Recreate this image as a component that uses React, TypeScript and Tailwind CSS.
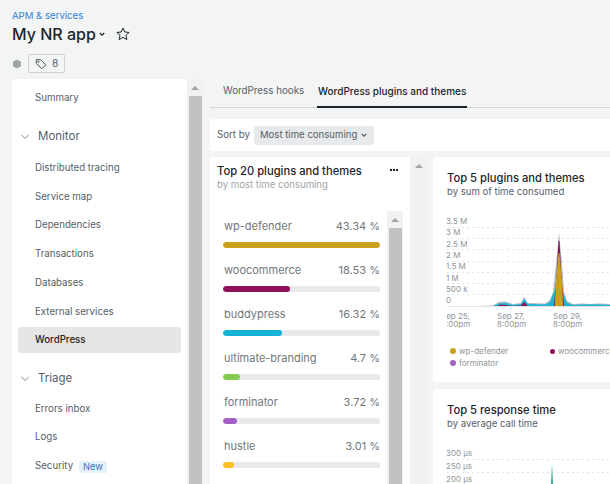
import React from "react";

function Chevron({ className }: { className?: string }) {
  return (
    <svg viewBox="0 0 12 8" className={className} fill="none" stroke="currentColor" strokeWidth="1">
      <path d="M1 1l5 5 5-5" />
    </svg>
  );
}

function SmallCaret() {
  return (
    <svg viewBox="0 0 8 6" className="w-[6px] h-[5px] shrink-0" fill="none" stroke="currentColor" strokeWidth="1.6">
      <path d="M1 1l3 3 3-3" />
    </svg>
  );
}

function NavItem({ label, active, badge }: { label: string; active?: boolean; badge?: boolean }) {
  return (
    <div className={`mx-[6px] h-[26px] rounded-[3px] flex items-center pl-[17px] pt-[2px] text-[9.7px] mb-[2.8px] ${active ? "bg-[#e6e6e6] text-[#1d252c] font-medium" : "text-[#54606a]"}`}>
      {label}
      {badge && <span className="ml-[6px] bg-[#e3f1fb] text-[#3f6fb5] rounded-[2px] px-[4px] h-[12px] leading-[12px] text-[9.3px]">New</span>}
    </div>
  );
}

function Group({ label }: { label: string }) {
  return (
    <div className="flex items-center h-[20px] pl-[8px] text-[#54606a] text-[11.5px]">
      <Chevron className="w-[10px] h-[6px] text-[#54606a]" />
      <span className="ml-[8px]">{label}</span>
    </div>
  );
}

function ScrollBar({ className, thumb = true }: { className?: string; thumb?: boolean }) {
  return (
    <div className={`flex flex-col items-center bg-[#f1f1f1] ${className ?? ""}`}>
      <div className="h-[17px] w-full flex items-center justify-center shrink-0">
        <div className="w-0 h-0 border-l-[4px] border-r-[4px] border-b-[4px] border-l-transparent border-r-transparent border-b-[#a3a3a3]" />
      </div>
      {thumb && <div className="flex-1 w-[13px] bg-[#c1c1c1]" />}
    </div>
  );
}

const plugins = [
  { n: "wp-defender", v: "43.34 %", w: 157, c: "#cba01b" },
  { n: "woocommerce", v: "18.53 %", w: 67, c: "#8f1059" },
  { n: "buddypress", v: "16.32 %", w: 59, c: "#14b3d6" },
  { n: "ultimate-branding", v: "4.7 %", w: 17, c: "#84c951" },
  { n: "forminator", v: "3.72 %", w: 14, c: "#a45fc2" },
  { n: "hustle", v: "3.01 %", w: 11, c: "#fbbf24" },
];

function Chart1() {
  return (
    <svg viewBox="0 0 177 94" className="w-[177px] h-[94px] block">
      {[11, 22, 33, 45, 56, 67, 78].map((y) => (
        <line key={y} x1="14" x2="177" y1={y + 0.5} y2={y + 0.5} stroke="#e3e4e4" strokeWidth="1" strokeDasharray="2 3" />
      ))}
      <line x1="14" x2="177" y1="90.5" y2="90.5" stroke="#e3e4e4" />
      <path d="M45 90 L60 89.5 L66 86 L72 85.5 L80 88 L88 87 L91 81 L95 87 L112 87.5 L117 84 L120 76 L123 48 L126 16 L129 48 L131 76 L134 85 L140 88 L150 87.5 L156 88 L166 87.5 L177 88 L177 90 Z" fill="#aebbc2" />
      <path d="M45 90 L60 90 L66 87.5 L72 87 L80 89 L88 88 L91 83 L95 88 L112 88.5 L117 86 L120 78 L123 72 L129 72 L132 82 L134 87 L140 89 L150 88.5 L166 88.5 L177 89 L177 90 Z" fill="#1cb4d4" />
      <path d="M121 90 L123.5 60 L125.5 25 L126.5 25 L128.5 60 L131 90 Z" fill="#8f1059" />
      <path d="M122 90 L122.5 71 L125.5 37 L126.5 37 L129.5 71 L130 90 Z" fill="#cba01b" />
      <path d="M64 90 L68 88.5 L80 90 L88 89.5 L91 86 L95 90 Z" fill="#8f1059" />
    </svg>
  );
}

function Chart2() {
  return (
    <svg viewBox="0 0 177 36" className="w-[177px] h-[36px] block">
      {[11, 24].map((y) => (
        <line key={y} x1="14" x2="177" y1={y + 0.5} y2={y + 0.5} stroke="#e3e4e4" strokeDasharray="2 3" />
      ))}
      <path d="M118 36 L119 16 L120 36 Z" fill="#2fa58f" />
    </svg>
  );
}

export default function App() {
  return (
    <div className="w-[610px] h-[484px] overflow-hidden bg-[#f3f5f4] font-['Inter',sans-serif]">
      <div className="pl-[12px] pt-[10px] h-[79px]">
        <div className="text-[9.6px] leading-[12px] text-[#2f7fd6]">APM &amp; services</div>
        <div className="flex items-center mt-[1px] h-[22px]">
          <span className="text-[16px] font-medium text-[#1d252c]">My NR app</span>
          <span className="ml-[3px] text-[#1d252c]"><SmallCaret /></span>
          <svg viewBox="0 0 24 24" className="w-[16px] h-[16px] ml-[10px] text-[#1d252c]" fill="none" stroke="currentColor" strokeWidth="1.5">
            <path d="M12 3l2.8 6 6.4.7-4.8 4.3 1.4 6.4L12 17l-5.8 3.4 1.4-6.4-4.8-4.3 6.4-.7z" />
          </svg>
        </div>
        <div className="flex items-center mt-[9px]">
          <svg viewBox="0 0 10 10" className="w-[10px] h-[10px]"><path d="M5 .5L9 2.8v4.4L5 9.5 1 7.2V2.8z" fill="#9ea5a9" /></svg>
          <div className="ml-[6px] h-[19px] w-[37px] border border-[#ccd0d2] rounded-[2px] flex items-center justify-center gap-[5px] text-[10px] text-[#54606a]">
            <svg viewBox="0 0 14 14" className="w-[12px] h-[12px]" fill="none" stroke="#2d3338" strokeWidth="1"><path d="M1.5 2h5l6 6-4.5 4.5-6.5-6z" /><circle cx="4" cy="4.5" r=".7" /></svg>
            8
          </div>
        </div>
      </div>

      <div className="flex h-[405px]">
        <div className="ml-[12px] w-[175px] bg-white rounded-t-[3px] pt-[5px] overflow-hidden shrink-0">
          <NavItem label="Summary" />
          <div className="h-[14.2px]" />
          <Group label="Monitor" />
          <div className="h-[7px]" />
          {["Distributed tracing", "Service map", "Dependencies", "Transactions", "Databases", "External services"].map((l) => (
            <NavItem key={l} label={l} />
          ))}
          <NavItem label="WordPress" active />
          <div className="h-[13.4px]" />
          <Group label="Triage" />
          <div className="h-[6px]" />
          <NavItem label="Errors inbox" />
          <NavItem label="Logs" />
          <NavItem label="Security" badge />
        </div>
        <ScrollBar className="w-[16px] shrink-0" />

        <div className="ml-[7px] flex-1 min-w-0">
          <div className="h-[29px] border-b border-[#d4d7d8] flex text-[10px]">
            <div className="pl-[13px] w-[107px] h-[29px] pb-[5px] flex items-center text-[9.8px] text-[#54606a]">WordPress hooks</div>
            <div className="w-[150px] pl-[1px] h-[29px] pb-[3px] border-b-2 border-[#1d252c] flex items-center font-medium text-[#1d252c] whitespace-nowrap">WordPress plugins and themes</div>
          </div>
          <div className="mt-[11px] h-[32px] bg-white rounded-l-[3px] flex items-center pl-[7px] text-[9.7px]">
            <span className="text-[#54606a]">Sort by</span>
            <div className="ml-[4px] h-[19px] w-[120px] bg-[#e8e9ea] rounded-[2px] flex items-center pl-[6px] gap-[4px] text-[9.6px] text-[#54606a] whitespace-nowrap">
              Most time consuming <SmallCaret />
            </div>
          </div>
          <div className="flex mt-[6px]">
            <div className="w-[200px] h-[327px] bg-white rounded-t-[3px] pl-[7px] shrink-0">
              <div className="flex items-start pt-[7px] h-[54px]">
                <div className="w-[173px]">
                  <div className="text-[11.2px] leading-[14px] font-medium text-[#1d252c] whitespace-nowrap">Top 20 plugins and themes</div>
                  <div className="text-[9.6px] leading-[13px] text-[#9ea5a9]">by most time consuming</div>
                </div>
                <div className="mt-[5px] text-[#1d252c] flex gap-[1px]">
                  <i className="w-[2px] h-[2px] bg-current" /><i className="w-[2px] h-[2px] bg-current" /><i className="w-[2px] h-[2px] bg-current" />
                </div>
              </div>
              <div className="flex h-[273px]">
                <div className="w-[157px] ml-[6px] shrink-0">
                  {plugins.map((p) => (
                    <div key={p.n} className="h-[44px] pt-[8px]">
                      <div className="flex justify-between pl-[1px] text-[11px] leading-[14px] text-[#70777c]">
                        <span>{p.n}</span><span>{p.v}</span>
                      </div>
                      <div className="mt-[9px] h-[6px] rounded-[3px] bg-[#e8e9ea] overflow-hidden">
                        <div className="h-[6px] rounded-[3px]" style={{ width: p.w, background: p.c }} />
                      </div>
                    </div>
                  ))}
                </div>
                <ScrollBar className="w-[16px] ml-[7px] shrink-0" />
              </div>
            </div>
            <ScrollBar className="w-[17px] shrink-0 h-[327px]" thumb={false} />
            <div className="ml-[6px] w-[177px] shrink-0 overflow-hidden">
              <div className="bg-white rounded-l-[3px] h-[225px] pt-[14px]">
                <div className="pl-[14px] text-[11.2px] leading-[14px] font-medium text-[#1d252c] whitespace-nowrap">Top 5 plugins and themes</div>
                <div className="pl-[14px] text-[9.6px] leading-[13px] text-[#54606a]">by sum of time consumed</div>
                <div className="relative mt-[18px] h-[94px]">
                  <Chart1 />
                  {["3.5 M", "3 M", "2.5 M", "2 M", "1.5 M", "1 M", "500 k", "0"].map((t, i) => (
                    <div key={t} className="absolute left-[13px] text-[8px] leading-[10px] text-[#8e9599]" style={{ top: i * 11.3 }}>{t}</div>
                  ))}
                </div>
                <div className="flex pl-[14px] text-[8px] leading-[8px] text-[#8e9599] mt-[2px] h-[16px]">
                  <div className="w-[50px] overflow-hidden"><div className="ml-[-6px] whitespace-nowrap">Sep 25,<br />8:00pm</div></div>
                  <div className="w-[56px]">Sep 27,<br />8:00pm</div>
                  <div>Sep 29,<br />8:00pm</div>
                </div>
                <div className="mt-[17px] pl-[17px] text-[8px] leading-[12px] text-[#8e9599] whitespace-nowrap overflow-hidden">
                  <div className="flex">
                    <div className="w-[100px] shrink-0 flex items-center"><i className="w-[6px] h-[6px] rounded-full bg-[#cba01b] mr-[3px]" />wp-defender</div>
                    <div className="flex items-center shrink-0"><i className="w-[5px] h-[5px] rounded-full bg-[#8f1059] mr-[3px]" />woocommerce</div>
                  </div>
                  <div className="flex items-center"><i className="w-[6px] h-[6px] rounded-full bg-[#a45fc2] mr-[3px]" />forminator</div>
                </div>
              </div>
              <div className="mt-[7px] bg-white rounded-l-[3px] h-[100px] pt-[14px]">
                <div className="pl-[14px] text-[11.2px] leading-[14px] font-medium text-[#1d252c]">Top 5 response time</div>
                <div className="pl-[14px] text-[9.6px] leading-[13px] text-[#54606a]">by average call time</div>
                <div className="relative mt-[18px] h-[36px]">
                  <Chart2 />
                  {["300 µs", "250 µs", "200 µs"].map((t, i) => (
                    <div key={t} className="absolute left-[13px] text-[8px] leading-[10px] text-[#8e9599]" style={{ top: i * 13 }}>{t}</div>
                  ))}
                </div>
              </div>
            </div>
          </div>
        </div>
      </div>
    </div>
  );
}
